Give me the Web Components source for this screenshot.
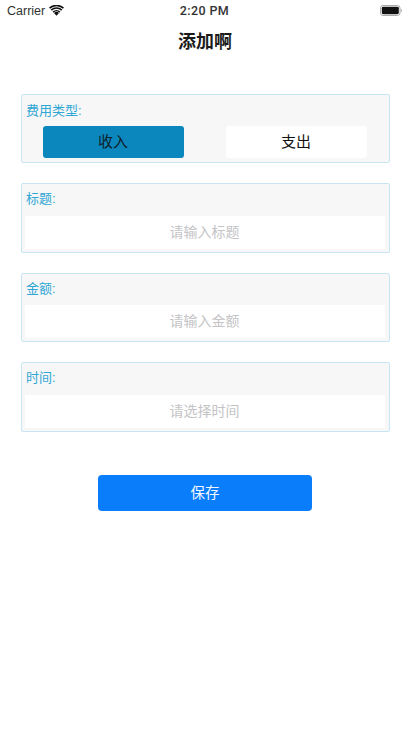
<!DOCTYPE html>
<html>
<head>
<meta charset="utf-8">
<style>
    html, body { margin: 0; background: #fff; }
    body { width: 410px; height: 732px; overflow: hidden; font-family: "Liberation Sans", "Noto Sans CJK SC", sans-serif; }
    main { display: flex; flex-direction: column; gap: 20px; padding: 30px 20px 0 20px; }
</style>
</head>
<body>
<status-bar></status-bar>
<nav-title>添加啊</nav-title>
<main>
    <type-field label="费用类型:"></type-field>
    <text-field label="标题:" placeholder="请输入标题"></text-field>
    <text-field label="金额:" placeholder="请输入金额"></text-field>
    <text-field label="时间:" placeholder="请选择时间"></text-field>
</main>
<save-button>保存</save-button>

<script>
class StatusBar extends HTMLElement {
    constructor() {
        super()
        this.shadow = this.attachShadow({ mode: 'open' })
        this.shadow.innerHTML = `
            <style>
                :host {
                    display: grid;
                    grid-template-columns: 1fr auto 1fr;
                    align-items: center;
                    height: 21px;
                    padding: 0 8px 0 7px;
                    font-size: 12.5px;
                    color: #333;
                }
                .left { display: flex; align-items: center; gap: 4px; }
                .right { display: flex; justify-content: flex-end; }
                .time { font-weight: 500; font-family: Roboto, "Liberation Sans", sans-serif; font-size: 12.5px; letter-spacing: .4px; }
                svg { display: block; }
            </style>
            <div class="left">
                <span>Carrier</span>
                <svg width="15" height="11" viewBox="0 0 15 11">
                    <path d="M7.5 10.8 5 8a3.6 3.6 0 0 1 5 0z" fill="#111"/>
                    <path d="M3.6 6.6a5.7 5.7 0 0 1 7.8 0l-1 1.1a4.2 4.2 0 0 0-5.8 0z" fill="#111"/>
                    <path d="M1.7 4.5a8.5 8.5 0 0 1 11.6 0l-1.1 1.2a6.9 6.9 0 0 0-9.4 0z" fill="#111"/>
                    <path d="M0 2.6a11 11 0 0 1 15 0l-1.1 1.2a9.4 9.4 0 0 0-12.8 0z" fill="#111"/>
                </svg>
            </div>
            <span class="time">2:20 PM</span>
            <div class="right">
                <svg width="22" height="11" viewBox="0 0 22 11">
                    <rect x=".5" y=".5" width="19.5" height="10" rx="2.5" fill="none" stroke="#aaa"/>
                    <rect x="1.8" y="1.8" width="17" height="7.4" rx="1.4" fill="#111"/>
                    <rect x="20.8" y="4" width="1.2" height="3" rx=".6" fill="#bbb"/>
                </svg>
            </div>
        `
    }
}

class NavTitle extends HTMLElement {
    constructor() {
        super()
        this.shadow = this.attachShadow({ mode: 'open' })
        this.shadow.innerHTML = `
            <style>
                :host {
                    display: flex;
                    justify-content: center;
                    align-items: center;
                    height: 43px;
                    font-size: 18px;
                    line-height: 43px;
                    font-weight: 700;
                    color: #1a1a1a;
                }
            </style>
            <slot></slot>
        `
    }
}

const fieldStyles = `
    :host {
        display: block;
        box-sizing: border-box;
        height: 69.4px;
        width: 369px;
        margin-left: .5px;
        padding: 0 3px 3px 3px;
        background: #f7f7f8;
        border: 1px solid #c6e6f4;
        border-radius: 2px;
    }
    .label {
        height: 30px;
        line-height: 31px;
        padding-left: 1.5px;
        font-size: 13px;
        color: #2fa6d3;
    }
`

class TypeField extends HTMLElement {
    constructor() {
        super()
        this.shadow = this.attachShadow({ mode: 'open' })
        this.shadow.innerHTML = `
            <style>
                ${fieldStyles}
                .row { display: flex; gap: 42px; padding: 1px 0 0 18px; }
                .opt {
                    width: 141px;
                    height: 32px;
                    line-height: 32px;
                    text-align: center;
                    font-size: 15px;
                    border-radius: 3px;
                    color: #111;
                    background: #fff;
                }
                .opt.active { background: #0b87bd; color: #10222c; }
            </style>
            <div class="label">${this.getAttribute('label')}</div>
            <div class="row">
                <div class="opt active">收入</div>
                <div class="opt">支出</div>
            </div>
        `
    }
}

class TextField extends HTMLElement {
    constructor() {
        super()
        this.shadow = this.attachShadow({ mode: 'open' })
        this.shadow.innerHTML = `
            <style>
                ${fieldStyles}
                :host { padding-right: 4px; }
                .label { height: 31.4px; line-height: 30px; }
                .input {
                    height: 33px;
                    line-height: 32px;
                    text-align: center;
                    font-size: 14px;
                    color: #c4c4c6;
                    background: #fff;
                }
            </style>
            <div class="label">${this.getAttribute('label')}</div>
            <div class="input">${this.getAttribute('placeholder')}</div>
        `
    }
}

class SaveButton extends HTMLElement {
    constructor() {
        super()
        this.shadow = this.attachShadow({ mode: 'open' })
        this.shadow.innerHTML = `
            <style>
                :host {
                    display: block;
                    box-sizing: border-box;
                    width: 214px;
                    height: 36px;
                    margin: 43.4px 0 0 98px;
                    line-height: 36px;
                    text-align: center;
                    font-size: 14.5px;
                    color: #f2f8ff;
                    background: #0a7dfb;
                    border-radius: 4px;
                }
            </style>
            <slot></slot>
        `
    }
}

customElements.define('status-bar', StatusBar)
customElements.define('nav-title', NavTitle)
customElements.define('type-field', TypeField)
customElements.define('text-field', TextField)
customElements.define('save-button', SaveButton)
</script>
</body>
</html>
